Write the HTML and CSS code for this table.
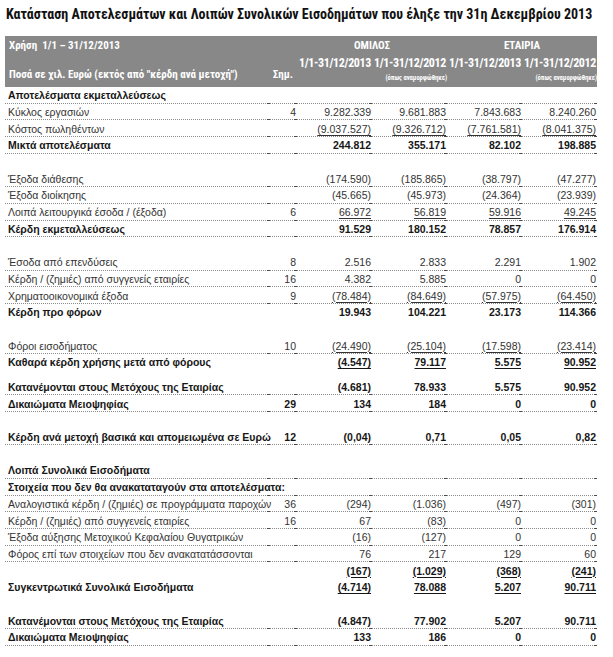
FILE: index.html
```html
<!DOCTYPE html>
<html lang="el">
<head>
<meta charset="utf-8">
<title>Κατάσταση Αποτελεσμάτων</title>
<link rel="stylesheet" href="styles.css">
</head>
<body>
<h1 class="title">Κατάσταση Αποτελεσμάτων και Λοιπών Συνολικών Εισοδημάτων που έληξε την 31η Δεκεμβρίου 2013</h1>
<table class="fs">
  <colgroup>
    <col class="c-label"><col class="c-note"><col class="c-num"><col class="c-num"><col class="c-num"><col class="c-num">
  </colgroup>
  <thead>
    <tr class="hr1">
      <th class="hl">Χρήση &nbsp;1/1 – 31/12/2013</th>
      <th></th>
      <th colspan="2" class="hg">ΟΜΙΛΟΣ</th>
      <th colspan="2" class="hg">ΕΤΑΙΡΙΑ</th>
    </tr>
    <tr class="hr2">
      <th class="hl">Ποσά σε χιλ. Ευρώ (εκτός από "κέρδη ανά μετοχή")</th>
      <th class="hn">Σημ.</th>
      <th class="hd"><div class="date">1/1-31/12/2013</div><div class="sub">&nbsp;</div></th>
      <th class="hd"><div class="date">1/1-31/12/2012</div><div class="sub">(όπως αναμορφώθηκε)</div></th>
      <th class="hd"><div class="date">1/1-31/12/2013</div><div class="sub">&nbsp;</div></th>
      <th class="hd"><div class="date">1/1-31/12/2012</div><div class="sub">(όπως αναμορφώθηκε)</div></th>
    </tr>
  </thead>
  <tbody>
    <tr class="r b ln"><td>Αποτελέσματα εκμεταλλεύσεως</td><td></td><td></td><td></td><td></td><td></td></tr>
    <tr class="r ln"><td>Κύκλος εργασιών</td><td>4</td><td>9.282.339</td><td>9.681.883</td><td>7.843.683</td><td>8.240.260</td></tr>
    <tr class="r ln"><td>Κόστος πωληθέντων</td><td></td><td><u>(9.037.527)</u></td><td><u>(9.326.712)</u></td><td><u>(7.761.581)</u></td><td><u>(8.041.375)</u></td></tr>
    <tr class="r b ln"><td>Μικτά αποτελέσματα</td><td></td><td>244.812</td><td>355.171</td><td>82.102</td><td>198.885</td></tr>
    <tr class="gap"><td colspan="6"></td></tr>
    <tr class="r ln"><td>Έξοδα διάθεσης</td><td></td><td>(174.590)</td><td>(185.865)</td><td>(38.797)</td><td>(47.277)</td></tr>
    <tr class="r ln"><td>Έξοδα διοίκησης</td><td></td><td>(45.665)</td><td>(45.973)</td><td>(24.364)</td><td>(23.939)</td></tr>
    <tr class="r ln"><td>Λοιπά λειτουργικά έσοδα / (έξοδα)</td><td>6</td><td><u>66.972</u></td><td><u>56.819</u></td><td><u>59.916</u></td><td><u>49.245</u></td></tr>
    <tr class="r b ln"><td>Κέρδη εκμεταλλεύσεως</td><td></td><td>91.529</td><td>180.152</td><td>78.857</td><td>176.914</td></tr>
    <tr class="gap"><td colspan="6"></td></tr>
    <tr class="r ln"><td>Έσοδα από επενδύσεις</td><td>8</td><td>2.516</td><td>2.833</td><td>2.291</td><td>1.902</td></tr>
    <tr class="r ln"><td>Κέρδη / (ζημιές) από συγγενείς εταιρίες</td><td>16</td><td>4.382</td><td>5.885</td><td>0</td><td>0</td></tr>
    <tr class="r ln"><td>Χρηματοοικονομικά έξοδα</td><td>9</td><td><u>(78.484)</u></td><td><u>(84.649)</u></td><td><u>(57.975)</u></td><td><u>(64.450)</u></td></tr>
    <tr class="r b"><td>Κέρδη προ φόρων</td><td></td><td>19.943</td><td>104.221</td><td>23.173</td><td>114.366</td></tr>
    <tr class="gap"><td colspan="6"></td></tr>
    <tr class="r ln"><td>Φόροι εισοδήματος</td><td>10</td><td><u>(24.490)</u></td><td><u>(25.104)</u></td><td><u>(17.598)</u></td><td><u>(23.414)</u></td></tr>
    <tr class="r b"><td>Καθαρά κέρδη χρήσης μετά από φόρους</td><td></td><td><u>(4.547)</u></td><td><u>79.117</u></td><td><u>5.575</u></td><td><u>90.952</u></td></tr>
    <tr class="gap half"><td colspan="6"></td></tr>
    <tr class="r b ln"><td>Κατανέμονται στους Μετόχους της Εταιρίας</td><td></td><td>(4.681)</td><td>78.933</td><td>5.575</td><td>90.952</td></tr>
    <tr class="r b ln"><td>Δικαιώματα Μειοψηφίας</td><td>29</td><td>134</td><td>184</td><td>0</td><td>0</td></tr>
    <tr class="gap"><td colspan="6"></td></tr>
    <tr class="r b ln"><td>Κέρδη ανά μετοχή βασικά και απομειωμένα σε Ευρώ</td><td>12</td><td>(0,04)</td><td>0,71</td><td>0,05</td><td>0,82</td></tr>
    <tr class="gap"><td colspan="6"></td></tr>
    <tr class="r b ln"><td>Λοιπά Συνολικά Εισοδήματα</td><td></td><td></td><td></td><td></td><td></td></tr>
    <tr class="r b ln"><td>Στοιχεία που δεν θα ανακαταταγούν στα αποτελέσματα:</td><td></td><td></td><td></td><td></td><td></td></tr>
    <tr class="r ln"><td>Αναλογιστικά κέρδη / (ζημιές) σε προγράμματα παροχών</td><td>36</td><td>(294)</td><td>(1.036)</td><td>(497)</td><td>(301)</td></tr>
    <tr class="r ln"><td>Κέρδη / (ζημιές) από συγγενείς εταιρίες</td><td>16</td><td>67</td><td>(83)</td><td>0</td><td>0</td></tr>
    <tr class="r ln"><td>Έξοδα αύξησης Μετοχικού Κεφαλαίου Θυγατρικών</td><td></td><td>(16)</td><td>(127)</td><td>0</td><td>0</td></tr>
    <tr class="r ln"><td>Φόρος επί των στοιχείων που δεν ανακατατάσσονται</td><td></td><td>76</td><td>217</td><td>129</td><td>60</td></tr>
    <tr class="r b"><td></td><td></td><td><u>(167)</u></td><td><u>(1.029)</u></td><td><u>(368)</u></td><td><u>(241)</u></td></tr>
    <tr class="r b"><td>Συγκεντρωτικά Συνολικά Εισοδήματα</td><td></td><td><u>(4.714)</u></td><td><u>78.088</u></td><td><u>5.207</u></td><td><u>90.711</u></td></tr>
    <tr class="gap"><td colspan="6"></td></tr>
    <tr class="r b ln"><td>Κατανέμονται στους Μετόχους της Εταιρίας</td><td></td><td>(4.847)</td><td>77.902</td><td>5.207</td><td>90.711</td></tr>
    <tr class="r b ln"><td>Δικαιώματα Μειοψηφίας</td><td></td><td>133</td><td>186</td><td>0</td><td>0</td></tr>
  </tbody>
</table>
</body>
</html>
```
FILE: styles.css
```css
html, body {
  margin: 0;
  padding: 0;
  background: #ffffff;
}
body {
  padding: 6px 16px 0 5px;
  font-family: "Liberation Sans", Arial, sans-serif;
  font-size: 11px;
  line-height: 13px;
  color: #333333;
}
.title {
  margin: 0 0 14px 1px;
  font-family: "Roboto Condensed", "Liberation Sans Narrow", "DejaVu Sans Condensed", sans-serif;
  font-size: 14px;
  line-height: 16px;
  font-weight: bold;
  color: #111111;
  white-space: nowrap;
}
.fs {
  width: 592px;
  table-layout: fixed;
  border-collapse: separate;
  border-spacing: 0;
}
.c-label { width: 265px; }
.c-note { width: 27px; }
.c-num { width: 75px; }

.fs thead th {
  background: #888888;
  color: #ffffff;
  font-family: "Roboto Condensed", "Liberation Sans Narrow", "DejaVu Sans Condensed", sans-serif;
  font-weight: bold;
  font-size: 11px;
  line-height: 13px;
  padding: 0;
  white-space: nowrap;
}
.hr1 {
  height: 19px;
}
.hr1 th {
  font-size: 12px;
  line-height: 14px;
  vertical-align: middle;
}
.hr2 {
  height: 32px;
}
.hr2 th {
  vertical-align: top;
}
.fs thead .hl {
  text-align: left;
  padding-left: 4px;
}
.fs thead .hr2 .hl {
  padding-top: 13px;
}
.hg {
  text-align: center;
}
.fs thead .hn {
  text-align: right;
  padding-top: 13px;
  padding-right: 4px;
}
.hd {
  text-align: right;
}
.date {
  font-size: 12px;
  line-height: 13px;
  letter-spacing: -0.35px;
  padding-top: 2px;
  padding-right: 1px;
}
.sub {
  font-size: 6.5px;
  line-height: 7px;
  padding-top: 5px;
}

.r td {
  height: 16.7px;
  padding: 0 1px 0 0;
  font-size: 10.5px;
  line-height: 12px;
  vertical-align: middle;
  text-align: right;
  white-space: nowrap;
}
.r td:first-child {
  text-align: left;
  padding-left: 3px;
}
.r.b td {
  font-weight: bold;
  color: #161616;
}
.ln td {
  background-image:
    linear-gradient(#4a4a4a, #4a4a4a),
    linear-gradient(to right, #8c8c8c 50%, transparent 50%);
  background-repeat: no-repeat, repeat-x;
  background-position: right bottom, left bottom;
  background-size: 3px 1px, 2px 1px;
}
u {
  text-decoration: underline;
  text-underline-offset: 2px;
  text-decoration-thickness: 1px;
}
.gap td {
  height: 16.7px;
  padding: 0;
}
.gap.half td {
  height: 8px;
}
```
